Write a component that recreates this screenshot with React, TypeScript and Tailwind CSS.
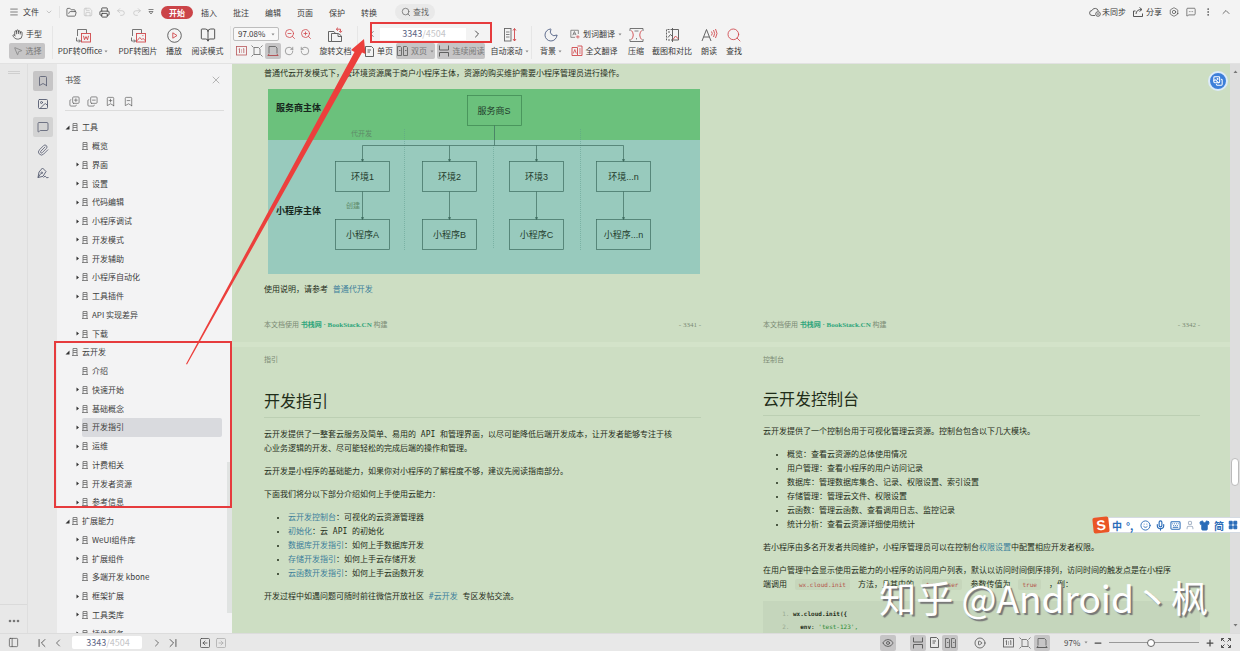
import { Fragment, type ReactNode } from "react";
import clsx from "clsx";
import {
  Bolt,
  BookOpen,
  Bookmark,
  BookmarkMinus,
  BookmarkPlus,
  ChevronDown,
  ChevronFirst,
  ChevronLast,
  ChevronLeft,
  ChevronRight,
  ChevronUp,
  CirclePlay,
  CopyMinus,
  CopyPlus,
  EllipsisVertical,
  Eye,
  FolderOpen,
  Hand,
  Image,
  Images,
  Keyboard,
  LayoutGrid,
  Menu,
  MessageSquare,
  MessageSquareMore,
  Mic,
  Minus,
  Moon,
  MousePointer2,
  PanelLeft,
  Paperclip,
  Plus,
  Printer,
  Redo2,
  RotateCcw,
  RotateCw,
  Save,
  Search,
  Shirt,
  Smile,
  SquareArrowLeft,
  SquareArrowRight,
  Undo2,
  User,
  X,
  ZoomIn,
  ZoomOut,
} from "lucide-react";

const UI_FONT = "font-['Noto_Sans_CJK_SC',sans-serif]";
const DOC_FONT = "font-['DejaVu_Sans_Mono','Noto_Sans_CJK_SC',monospace]";

type TreeNode = { label: string; level: 0 | 1; leaf?: boolean; active?: boolean };

const TREE: TreeNode[] = [
  { label: "工具", level: 0 },
  { label: "概览", level: 1, leaf: true },
  { label: "界面", level: 1 },
  { label: "设置", level: 1 },
  { label: "代码编辑", level: 1 },
  { label: "小程序调试", level: 1 },
  { label: "开发模式", level: 1 },
  { label: "开发辅助", level: 1 },
  { label: "小程序自动化", level: 1 },
  { label: "工具插件", level: 1 },
  { label: "API 实现差异", level: 1, leaf: true },
  { label: "下载", level: 1 },
  { label: "云开发", level: 0 },
  { label: "介绍", level: 1, leaf: true },
  { label: "快速开始", level: 1 },
  { label: "基础概念", level: 1 },
  { label: "开发指引", level: 1, active: true },
  { label: "运维", level: 1 },
  { label: "计费相关", level: 1 },
  { label: "开发者资源", level: 1 },
  { label: "参考信息", level: 1 },
  { label: "扩展能力", level: 0 },
  { label: "WeUI组件库", level: 1 },
  { label: "扩展组件", level: 1 },
  { label: "多端开发 kbone", level: 1, leaf: true },
  { label: "框架扩展", level: 1 },
  { label: "工具类库", level: 1 },
  { label: "插件服务", level: 1 },
];

const TABS = ["开始", "插入", "批注", "编辑", "页面", "保护", "转换"];

function IconButton({
  label,
  active,
  className,
  children,
}: {
  label: string;
  active?: boolean;
  className?: string;
  children: ReactNode;
}) {
  return (
    <button
      type="button"
      aria-label={label}
      className={clsx(
        "flex shrink-0 items-center justify-center rounded-xs",
        active && "bg-[#c6c5c6]",
        className
      )}
    >
      {children}
    </button>
  );
}

// Ribbon tool: icon on the upper line, caption on the lower one.
function BigTool({
  label,
  menu,
  className,
  children,
}: {
  label: string;
  menu?: boolean;
  className: string;
  children: ReactNode;
}) {
  return (
    <button type="button" className={clsx("flex shrink-0 flex-col items-center gap-px", className)}>
      <span className="flex h-4 items-center pt-0.5">{children}</span>
      <span className="flex h-4 items-center gap-0.5 whitespace-nowrap">
        {label}
        {menu && <Caret />}
      </span>
    </button>
  );
}

function Caret() {
  return (
    <svg width="4" height="3" viewBox="0 0 4 3" fill="#888" className="shrink-0">
      <path d="M0.5 0.5h3L2 2.5z" />
    </svg>
  );
}

function SmallTool({
  label,
  active,
  menu,
  className,
  children,
}: {
  label: string;
  active?: boolean;
  menu?: boolean;
  className?: string;
  children: ReactNode;
}) {
  return (
    <button
      type="button"
      className={clsx(
        "flex h-4 shrink-0 items-center justify-center gap-[3px] whitespace-nowrap rounded-xs",
        active && "bg-[#c6c5c6] text-[#777]",
        className
      )}
    >
      {children}
      <span>{label}</span>
      {menu && <Caret />}
    </button>
  );
}

function ActualSizeIcon({ color }: { color: string }) {
  return (
    <svg width="11" height="10" viewBox="0 0 11 10" fill="none" stroke={color} strokeWidth="0.8">
      <rect x="0.5" y="0.5" width="10" height="8.5" />
      <path d="M2.700 3.200l.8-.6v4.400M7 3.200l.8-.6v4.400M5.500 3.500v1M5.500 5.500v1" />
    </svg>
  );
}

function FitPageIcon() {
  return (
    <svg width="12" height="12" viewBox="0 0 12 12" fill="none" stroke="#666" strokeWidth="0.8">
      <path d="M3 9.500v-7h4.500L9 4v5.500z" />
      <path d="M0.500 0.500l2 2M11.500 0.500l-2 2M0.500 11.500l2-2M11.500 11.500l-2-2" />
    </svg>
  );
}

function FitWidthIcon({ color }: { color: string }) {
  return (
    <svg width="12" height="12" viewBox="0 0 12 12" fill="none" stroke="#666" strokeWidth="0.9">
      <path d="M2 8.500V1.500h6.500L10 3v5.500" />
      <path d="M1 10.500h10M2.200 9L.7 10.500M9.800 9l1.500 1.500" stroke={color} />
    </svg>
  );
}

function ContinuousIcon() {
  return (
    <svg width="12" height="12" viewBox="0 0 12 12" fill="none" stroke="#555" strokeWidth="0.9">
      <path d="M1.500 0.500v4.500h9V0.500M1.500 11.500V7.500h9v4" />
    </svg>
  );
}

function SinglePageIcon() {
  return (
    <svg width="9" height="11" viewBox="0 0 9 11" fill="none" stroke="#555" strokeWidth="0.9" className="shrink-0">
      <path d="M0.500 0.500h6l2 2v8h-8zM2.500 4h3.500M2.500 6h2.500" />
    </svg>
  );
}

function TwoPageIcon() {
  return (
    <svg width="11" height="10" viewBox="0 0 11 10" fill="none" stroke="#666" strokeWidth="0.9" className="shrink-0">
      <path d="M0.500 0.500h3l1 1v8h-4zM6.500 0.500h3l1 1v8h-4zM2 4.500h1.500M8 4.500h1.500" />
    </svg>
  );
}

function ShareIcon() {
  return (
    <svg width="11" height="10" viewBox="0 0 11 10" fill="none" stroke="#444" strokeWidth="0.9">
      <path d="M2.500 4H.5v5.500h9V6.500" />
      <path d="M3 7q.3-4.500 5.500-4.500M6.500.5l2.500 2-2.500 2" />
    </svg>
  );
}

function UnsyncedIcon() {
  return (
    <svg width="12" height="10" viewBox="0 0 12 10" fill="none" stroke="#555" strokeWidth="0.9">
      <path d="M6 8.500H3.200a2.500 2.500 0 01-.2-5 3.300 3.300 0 016.300.5" />
      <circle cx="9" cy="7" r="2.300" />
      <path d="M8 7h2" />
    </svg>
  );
}

function FullscreenIcon() {
  return (
    <svg width="10" height="10" viewBox="0 0 10 10" fill="none" stroke="#555">
      <path d="M.5 3V.5H3M.5.5l3 3M7 .5h2.500V3M9.500.5l-3 3M.5 7v2.500H3M.5 9.500l3-3M7 9.500h2.500V7M9.500 9.500l-3-3" />
    </svg>
  );
}

function SignIcon() {
  return (
    <svg width="12" height="12" viewBox="0 0 12 12" fill="none" stroke="currentColor" strokeWidth="0.9">
      <path d="M1 10.500L2 5l3.500-4L9 4.500l-3 4.800-5 1.200 2.800-4" />
      <circle cx="4.800" cy="5.800" r="0.800" />
      <path d="M6.500 10.500q2-2.500 2.300-.8t2.700.8" />
    </svg>
  );
}

function ConvertIcon({ kind }: { kind: "office" | "image" }) {
  return (
    <svg width="16" height="15" viewBox="0 0 16 15" fill="none" stroke="#666" strokeWidth="0.9">
      <path d="M2.500 8V1.500h9V5" />
      <path d="M1.500 9.500v3.500h4M4 11.500l1.400 1.500L4 14.500" />
      <rect x="6.500" y="5.500" width="9" height="8.500" stroke="#d0484c" />
      {kind === "office" ? (
        <path d="M8.500 7.800l1 4 1.500-3.200 1.500 3.200 1-4" stroke="#d0484c" />
      ) : (
        <path d="M7 12.800l2.800-3.300 2 2.200 1.300-1.300 2.200 2.400M12.400 7.600h1" stroke="#d0484c" />
      )}
    </svg>
  );
}

function RotateDocIcon() {
  return (
    <svg width="17" height="16" viewBox="0 0 17 16" fill="none" stroke="#555" strokeWidth="0.9">
      <path d="M4.500 14.500h-3v-10h5.500l1.500 2" />
      <path d="M4.500 14.500v-8h7l3 2.500v5.500zM11 7v2.500h3" />
      <path d="M9.500 2.200h4v2.600M11 .6L9.300 2.200 11 3.800M12 4l1.600 1.400L15.200 4" stroke="#d0484c" />
    </svg>
  );
}

function AutoScrollIcon() {
  return (
    <svg width="14" height="16" viewBox="0 0 14 16" fill="none" stroke="#666" strokeWidth="0.9">
      <rect x="1.500" y="1.500" width="6.500" height="12.500" />
      <path d="M3 5h3.500M3 7.500h3.500M3 10h3.500" strokeWidth="0.8" />
      <path d="M11.500 1.500V14M10 3.500l1.500-2 1.500 2M10 12l1.500 2 1.500-2" stroke="#d0484c" />
    </svg>
  );
}

function TranslateIcon({ full }: { full?: boolean }) {
  return (
    <svg
      width="12"
      height="12"
      viewBox="0 0 12 12"
      fill="none"
      stroke={full ? "#d0484c" : "#666"}
      strokeWidth="0.9"
    >
      {full ? (
        <>
          <path d="M1 2.500h5.500v8H1zM6.500 1H11v9.500H6.500" />
          <path d="M2.300 8.500l1.500-4 1.500 4M8 4h1.800M8 6h1.800M8 8h1.800" strokeWidth="0.8" />
        </>
      ) : (
        <>
          <path d="M10 6V1.500H1v8.500h5" />
          <path d="M3.300 7.500L5.300 3l2 4.500M4 6h2.600" />
          <path d="M7 9.500h4.500M9.500 7.500v4" stroke="#d0484c" />
        </>
      )}
    </svg>
  );
}

function CompressIcon() {
  return (
    <svg width="15" height="14" viewBox="0 0 15 14" fill="none" strokeWidth="0.9">
      <path d="M1 3V.5h13V3M1 11v2.500h13V11" stroke="#666" />
      <path d="M2.500 2.500q3.500 4.500 0 9M12.500 2.500q-3.500 4.500 0 9" stroke="#d0484c" />
      <path d="M5.500 3h4M7.500 10v1.500" stroke="#777" />
    </svg>
  );
}

function CompareIcon() {
  return (
    <svg width="15" height="14" viewBox="0 0 15 14" fill="none" stroke="#555" strokeWidth="0.9">
      <path d="M7.500 1.500h-6v10.500h6" strokeDasharray="2 1" />
      <path d="M7.500 1.500h6v10.500h-6" />
      <path d="M7.500 0v14M3 4h2M3 9.500l2.500-3 2 2" />
      <path d="M8 11.500l2.500-3.500 3 3" stroke="#d0484c" />
    </svg>
  );
}

function ReadAloudIcon() {
  return (
    <svg width="17" height="14" viewBox="0 0 17 14" fill="none" stroke="#555" strokeWidth="0.9">
      <path d="M1 13L5.500 1.500 10 13M2.700 9h5.600" />
      <path d="M10.500 3.500q1.500 2 0 4M12.500 2q2.300 3.500 0 7M14.500 1q3 4.500 0 9" stroke="#d0484c" />
    </svg>
  );
}

function PageNumber({ className }: { className: string }) {
  return (
    <label
      className={clsx(
        "flex items-center justify-center bg-white text-[9px] text-[#c4c4c8]",
        className
      )}
    >
      <input
        type="text"
        aria-label="页码"
        defaultValue="3343"
        className="w-[22px] bg-transparent text-right text-[#5b6583] outline-none"
      />
      /4504
    </label>
  );
}

function TopBar() {
  return (
    <header className="flex shrink-0 flex-col bg-[#f3f3f3] text-[8px] text-[#3a3a3a]">
      <div className="flex h-6 items-center justify-between pl-[9px] pr-2">
        <div className="flex items-center">
          <button type="button" className="flex items-center gap-1 border-r border-[#e4e4e4] pr-1.5">
            <Menu size={10} strokeWidth={1.5} />
            文件
            <ChevronDown size={8} strokeWidth={1.5} className="ml-0.5 text-[#999]" />
          </button>
          <div className="flex items-center gap-1.5 pl-1.5">
            <IconButton label="打开">
              <FolderOpen size={11} strokeWidth={1.5} />
            </IconButton>
            <IconButton label="保存" className="text-[#bbb]">
              <Save size={10} strokeWidth={1.5} />
            </IconButton>
            <IconButton label="打印">
              <Printer size={11} strokeWidth={1.8} />
            </IconButton>
            <IconButton label="撤销" className="text-[#bbb]">
              <Undo2 size={10} strokeWidth={1.5} />
            </IconButton>
            <IconButton label="重做" className="text-[#bbb]">
              <Redo2 size={10} strokeWidth={1.5} />
            </IconButton>
            <IconButton label="更多">
              <svg width="6" height="6" viewBox="0 0 6 6" fill="none" stroke="#666" strokeWidth="0.8">
                <path d="M0.500 0.500h5M1 2.500h4L3 5z" />
              </svg>
            </IconButton>
          </div>
          <nav className="ml-[7px] flex items-center">
            {TABS.map((tab, i) => (
              <button
                key={tab}
                type="button"
                className={clsx(
                  "h-[13px] w-8 rounded-full text-center leading-[13px]",
                  i === 0 && "bg-[#cb4448] font-bold text-white"
                )}
              >
                {tab}
              </button>
            ))}
          </nav>
          <button
            type="button"
            className="ml-2.5 flex h-4 items-center gap-0.5 rounded-full bg-[#e9e9e9] px-1.5 text-[#666]"
          >
            <Search size={10} strokeWidth={1.8} />
            查找
          </button>
        </div>
        <div className="flex items-center gap-[7px]">
          <button type="button" className="flex items-center gap-px">
            <UnsyncedIcon />
            未同步
          </button>
          <button type="button" className="flex items-center gap-0.5">
            <ShareIcon />
            分享
          </button>
          <IconButton label="设置">
            <Bolt size={10} strokeWidth={1.5} />
          </IconButton>
          <IconButton label="反馈">
            <MessageSquareMore size={10} strokeWidth={1.5} />
          </IconButton>
          <IconButton label="更多选项">
            <EllipsisVertical size={10} strokeWidth={1.5} />
          </IconButton>
          <IconButton label="收起功能区">
            <ChevronUp size={12} strokeWidth={1.4} />
          </IconButton>
        </div>
      </div>

      <div className="flex h-10 items-start border-b border-[#e2e2e2] pt-0.5">
        <div className="flex flex-col gap-px border-r border-[#e6e6e6] pl-[9px] pr-[7px]">
          <SmallTool label="手型" className="w-9">
            <Hand size={11} strokeWidth={1.6} />
          </SmallTool>
          <SmallTool label="选择" active className="w-9">
            <MousePointer2 size={10} strokeWidth={1.6} />
          </SmallTool>
        </div>
        <BigTool label="PDF转Office" menu className="w-[60px]">
          <ConvertIcon kind="office" />
        </BigTool>
        <BigTool label="PDF转图片" className="w-[50px]">
          <ConvertIcon kind="image" />
        </BigTool>
        <BigTool label="播放" className="w-[22px]">
          <svg width="15" height="15" viewBox="0 0 15 15" fill="none" stroke="#555" strokeWidth="0.9">
            <circle cx="7.500" cy="7.500" r="6.800" />
            <path d="M5.800 4.800v5.400l4.200-2.700z" stroke="#d0484c" />
          </svg>
        </BigTool>
        <BigTool label="阅读模式" className="w-[46px] border-r border-[#e6e6e6]">
          <BookOpen size={16} strokeWidth={1.3} />
        </BigTool>
        <div className="flex flex-col gap-px pl-0.5">
          <div className="flex h-4 items-center">
            <label className="relative mr-[3px] flex w-[46px] items-center">
              <select
                aria-label="缩放比例"
                className="h-3.5 w-full appearance-none rounded-xs border border-[#bdbdbd] bg-[#f8f8f8] pl-1 text-[8px] leading-3 outline-none"
              >
                <option>97.08%</option>
              </select>
              <span className="absolute right-1">
                <Caret />
              </span>
            </label>
            <IconButton label="缩小" className="w-4 text-[#d0484c]">
              <ZoomOut size={12} strokeWidth={1.6} />
            </IconButton>
            <IconButton label="放大" className="w-4 text-[#d0484c]">
              <ZoomIn size={12} strokeWidth={1.6} />
            </IconButton>
          </div>
          <div className="flex h-4 items-center">
            <IconButton label="实际大小" className="h-4 w-4">
              <ActualSizeIcon color="#b9585b" />
            </IconButton>
            <IconButton label="适合页面" className="h-4 w-4">
              <FitPageIcon />
            </IconButton>
            <IconButton label="适合宽度" active className="h-4 w-4">
              <FitWidthIcon color="#b04a4c" />
            </IconButton>
            <IconButton label="向左旋转" className="h-4 w-4 text-[#777]">
              <RotateCw size={10} strokeWidth={1.6} />
            </IconButton>
            <IconButton label="向右旋转" className="h-4 w-4 text-[#777]">
              <RotateCcw size={10} strokeWidth={1.6} />
            </IconButton>
          </div>
        </div>
        <BigTool label="旋转文档" className="w-[44px] border-r border-[#e6e6e6]">
          <RotateDocIcon />
        </BigTool>
        <div className="flex flex-col gap-px pl-1.5">
          <div className="flex h-4 items-center">
            <IconButton label="上一页" className="w-4">
              <ChevronLeft size={10} strokeWidth={1.5} />
            </IconButton>
            <PageNumber className="h-3 w-[86px]" />
            <IconButton label="下一页" className="w-[22px]">
              <ChevronRight size={12} strokeWidth={1.8} />
            </IconButton>
          </div>
          <div className="flex h-4 items-center gap-0.5">
            <SmallTool label="单页" className="w-[30px]">
              <SinglePageIcon />
            </SmallTool>
            <SmallTool label="双页" active menu className="w-[39px]">
              <TwoPageIcon />
            </SmallTool>
            <SmallTool label="连续阅读" active className="w-12">
              <ContinuousIcon />
            </SmallTool>
          </div>
        </div>
        <BigTool label="自动滚动" menu className="w-[44px] border-r border-[#e6e6e6]">
          <AutoScrollIcon />
        </BigTool>
        <BigTool label="背景" menu className="w-[38px]">
          <Moon size={16} strokeWidth={1.3} className="text-[#4a5a80]" />
        </BigTool>
        <div className="flex flex-col items-start gap-px">
          <SmallTool label="划词翻译" menu className="w-[52px]">
            <TranslateIcon />
          </SmallTool>
          <SmallTool label="全文翻译" className="w-12">
            <TranslateIcon full />
          </SmallTool>
        </div>
        <BigTool label="压缩" className="w-7">
          <CompressIcon />
        </BigTool>
        <BigTool label="截图和对比" className="w-[44px]">
          <CompareIcon />
        </BigTool>
        <BigTool label="朗读" className="w-[30px]">
          <ReadAloudIcon />
        </BigTool>
        <BigTool label="查找" className="w-5">
          <Search size={16} strokeWidth={1.3} className="text-[#d0484c]" />
        </BigTool>
      </div>
    </header>
  );
}

function Rail() {
  return (
    <>
      <div className="flex w-7 shrink-0 flex-col items-center justify-between border-r border-[#dedede] bg-[#e8e8e8]">
        <div className="mt-[7px] h-[3px] w-3 border-y border-[#cfcfcf]" />
        <div className="flex w-full justify-center border-t border-[#dadada] pb-2.5 pt-3.5">
          <svg width="12" height="4" viewBox="0 0 12 4" fill="#777">
            <circle cx="2" cy="2" r="1.300" />
            <circle cx="6" cy="2" r="1.300" />
            <circle cx="10" cy="2" r="1.300" />
          </svg>
        </div>
      </div>
      <div className="flex w-[29px] shrink-0 flex-col items-center gap-[3px] bg-[#e8e8e8] pt-[7px] text-[#555b70]">
        <IconButton label="书签" active className="h-5 w-5">
          <Bookmark size={12} strokeWidth={1.6} />
        </IconButton>
        <IconButton label="缩略图" className="h-5 w-5">
          <Image size={12} strokeWidth={1.8} />
        </IconButton>
        <IconButton label="批注" className="h-5 w-5 bg-[#d3d3d3]">
          <MessageSquare size={12} strokeWidth={1.6} />
        </IconButton>
        <IconButton label="附件" className="h-5 w-5">
          <Paperclip size={12} strokeWidth={1.6} />
        </IconButton>
        <IconButton label="签名" className="h-5 w-5">
          <SignIcon />
        </IconButton>
      </div>
    </>
  );
}

function NodeIcon() {
  return (
    <svg width="6" height="8" viewBox="0 0 6 8" fill="none" stroke="#777" strokeWidth="0.9" className="shrink-0">
      <path d="M1 7.500V.5h4v7M1 2.500h4M1 4.500h4M0 7.500h6" />
    </svg>
  );
}

function TreeRow({ node }: { node: TreeNode }) {
  return (
    <li className={clsx("flex items-center pr-[5px]", node.level === 0 ? "pl-2" : "pl-[18px]")}>
      <span className="flex w-[7px] shrink-0 items-center">
        {!node.leaf && (
          <svg width="5" height="5" viewBox="0 0 5 5" fill="#333">
            {node.level === 0 ? <path d="M4.500 0.500v4h-4z" /> : <path d="M1.500 0.500l2.500 2-2.500 2z" />}
          </svg>
        )}
      </span>
      <button
        type="button"
        className={clsx(
          "flex h-full flex-1 items-center gap-1 whitespace-nowrap rounded-xs text-left",
          node.active && "bg-[#d9dade]"
        )}
      >
        <NodeIcon />
        {node.label}
      </button>
    </li>
  );
}

function BookmarkPanel() {
  return (
    <aside className="flex w-[175px] shrink-0 flex-col bg-[#f3f3f4] text-[8px] text-[#3c3c3c]">
      <div className="flex h-[31px] items-center justify-between pl-2 pr-2.5">
        <h2>书签</h2>
        <IconButton label="关闭" className="text-[#999]">
          <X size={12} strokeWidth={1.4} />
        </IconButton>
      </div>
      <div className="mx-2 flex h-4 items-center gap-[7px] border-b border-[#dcdcdc] pb-0.5 pl-1 text-[#666]">
        <IconButton label="展开全部">
          <CopyPlus size={11} strokeWidth={1.6} className="-scale-y-100" />
        </IconButton>
        <IconButton label="折叠全部">
          <CopyMinus size={11} strokeWidth={1.6} className="-scale-y-100" />
        </IconButton>
        <IconButton label="添加书签">
          <BookmarkPlus size={11} strokeWidth={1.6} />
        </IconButton>
        <IconButton label="删除书签">
          <BookmarkMinus size={11} strokeWidth={1.6} />
        </IconButton>
      </div>
      <div className="flex min-h-0 flex-1 overflow-hidden">
        <ul className="grid h-[532px] flex-1 auto-rows-fr pt-[7px]">
          {TREE.map((node) => (
            <TreeRow key={node.label} node={node} />
          ))}
        </ul>
        <div className="flex w-[5px] flex-col justify-end pb-5">
          <div className="h-[151px] bg-[#e0e3e2]" />
        </div>
      </div>
    </aside>
  );
}

const ENVIRONMENTS = [
  { x: 94, env: "环境1", app: "小程序A" },
  { x: 181, env: "环境2", app: "小程序B" },
  { x: 268, env: "环境3", app: "小程序C" },
  { x: 355, env: "环境...n", app: "小程序...n" },
];

function TenantDiagram() {
  return (
    <svg
      viewBox="0 0 432 185"
      className="ml-1 mt-2 block w-[calc(100%-5px)] font-['Liberation_Sans','Noto_Sans_CJK_SC',sans-serif] text-[9px]"
    >
      <rect width="432" height="52" fill="#6bc17c" />
      <rect y="51" width="432" height="134" fill="#98cabd" />
      <g stroke="#5d9a8b" strokeDasharray="1 1" strokeWidth="0.5">
        <path d="M136.500 40v121M312.500 40v121M225.500 56v103" />
      </g>
      <g fill="none" stroke="#3d6b5f" strokeWidth="0.7">
        <rect x="199.500" y="6.500" width="54" height="30" stroke="#3d8350" />
        <path d="M226.500 36.500v20M94.500 72V56.500h261V72M181.500 56.500V72M268.500 56.500V72" />
        {ENVIRONMENTS.map(({ x }) => (
          <Fragment key={x}>
            <rect x={x - 26.5} y="72.500" width="54" height="30" />
            <rect x={x - 26.5} y="130.500" width="54" height="30" />
            <path d={`M${x + 0.5} 102.500v28`} />
            <path d={`M${x - 0.5} 70.500l1 2 1-2zM${x - 0.5} 128.500l1 2 1-2z`} fill="#3d6b5f" />
          </Fragment>
        ))}
      </g>
      <g fill="#1f3a2b" textAnchor="middle">
        <text x="226" y="25">服务商S</text>
        {ENVIRONMENTS.map(({ x, env, app }) => (
          <Fragment key={x}>
            <text x={x + 0.5} y="91">{env}</text>
            <text x={x + 0.5} y="149">{app}</text>
          </Fragment>
        ))}
      </g>
      <g fill="#16271c" fontWeight="700">
        <text x="8" y="22">服务商主体</text>
        <text x="8" y="125">小程序主体</text>
      </g>
      <g fill="#5e8a68" fontSize="7">
        <text x="83" y="47">代开发</text>
        <text x="78" y="119">创建</text>
      </g>
    </svg>
  );
}

function PageFooter({ page }: { page: number }) {
  return (
    <footer className="mt-auto flex justify-between font-['Liberation_Serif','Noto_Sans_CJK_SC',serif] text-[7px] leading-[14px] text-[#7b8b74]">
      <span>
        本文档使用{" "}
        <a href="#bookstack" className="font-bold text-[#2fa57b]">
          书栈网 · BookStack.CN
        </a>{" "}
        构建
      </span>
      <span>- {page} -</span>
    </footer>
  );
}

function DocLink({ children }: { children: ReactNode }) {
  return (
    <a href="#doc" className="text-[#3d7f9b]">
      {children}
    </a>
  );
}

function InlineCode({ children }: { children: ReactNode }) {
  return (
    <code className="mx-2 rounded-xs bg-[#c6d6bb] px-1 py-0.5 font-['DejaVu_Sans_Mono',monospace] text-[6px] text-[#b5534a]">
      {children}
    </code>
  );
}

const GUIDE_LINKS = [
  ["云开发控制台", "：可视化的云资源管理器"],
  ["初始化", "：云 API 的初始化"],
  ["数据库开发指引", "：如何上手数据库开发"],
  ["存储开发指引", "：如何上手云存储开发"],
  ["云函数开发指引", "：如何上手云函数开发"],
];

const CONSOLE_MODULES = [
  "概览：查看云资源的总体使用情况",
  "用户管理：查看小程序的用户访问记录",
  "数据库：管理数据库集合、记录、权限设置、索引设置",
  "存储管理：管理云文件、权限设置",
  "云函数：管理云函数、查看调用日志、监控记录",
  "统计分析：查看云资源详细使用统计",
];

function Document() {
  return (
    <main
      className={clsx(
        "grid min-w-0 flex-1 grid-cols-2 grid-rows-[278px_minmax(0,1fr)] gap-y-[5px] overflow-hidden bg-[#d3e3c9] text-[8px] leading-[14px] text-[#1f2d19]",
        DOC_FONT
      )}
    >
      <section className="flex flex-col bg-[#cddec3] pb-2.5 pl-8 pr-[30px] pt-[3px]">
        <p>普通代云开发模式下，云环境资源属于商户小程序主体，资源的购买维护需要小程序管理员进行操作。</p>
        <TenantDiagram />
        <p className="mt-[9px]">
          使用说明，请参考 <DocLink>普通代开发</DocLink>
        </p>
        <PageFooter page={3341} />
      </section>

      <section className="flex flex-col bg-[#cddec3] pb-2.5 pl-8 pr-[30px]">
        <PageFooter page={3342} />
      </section>

      <section className="overflow-hidden bg-[#cddec3] pl-8 pr-[30px] pt-1.5">
        <div className="text-[7px] text-[#7b8b74]">指引</div>
        <h1 className="mt-[23px] border-b border-[#bccfb3] pb-[3px] text-[16px] leading-6">开发指引</h1>
        <div className="mt-2.5 flex flex-col gap-[9px]">
          <p>
            云开发提供了一整套云服务及简单、易用的 API 和管理界面，以尽可能降低后端开发成本，让开发者能够专注于核
            <br />
            心业务逻辑的开发、尽可能轻松的完成后端的操作和管理。
          </p>
          <p>云开发是小程序的基础能力，如果你对小程序的了解程度不够，建议先阅读指南部分。</p>
          <p>下面我们将分以下部分介绍如何上手使用云能力：</p>
          <ul className="list-disc pl-6">
            {GUIDE_LINKS.map(([link, rest]) => (
              <li key={link}>
                <DocLink>{link}</DocLink>
                {rest}
              </li>
            ))}
          </ul>
          <p>
            开发过程中如遇问题可随时前往微信开放社区 <DocLink>#云开发</DocLink> 专区发帖交流。
          </p>
        </div>
      </section>

      <section className="overflow-hidden bg-[#cddec3] pl-8 pr-[30px] pt-1.5">
        <div className="text-[7px] text-[#7b8b74]">控制台</div>
        <h1 className="mt-[21px] border-b border-[#bccfb3] pb-[3px] text-[16px] leading-6">云开发控制台</h1>
        <div className="mt-[9px] flex flex-col gap-[9px]">
          <p>云开发提供了一个控制台用于可视化管理云资源。控制台包含以下几大模块。</p>
          <ul className="list-disc pl-6">
            {CONSOLE_MODULES.map((item) => (
              <li key={item}>{item}</li>
            ))}
          </ul>
          <p>
            若小程序由多名开发者共同维护，小程序管理员可以在控制台<DocLink>权限设置</DocLink>
            中配置相应开发者权限。
          </p>
          <p>
            在用户管理中会显示使用云能力的小程序的访问用户列表，默认以访问时间倒序排列，访问时间的触发点是在小程序
            <br />
            端调用
            <InlineCode>wx.cloud.init</InlineCode>
            方法，且其中的
            <InlineCode>traceUser</InlineCode>
            参数传值为
            <InlineCode>true</InlineCode>
            ，例：
          </p>
          <ol className="list-decimal bg-[#c5d6bc] py-1.5 pl-[30px] text-[6px] leading-[13px] marker:text-[#9aaa92]">
            <li>
              <code className="whitespace-pre font-['DejaVu_Sans_Mono',monospace] font-bold">
                {"wx.cloud.init({"}
              </code>
            </li>
            <li>
              <code className="whitespace-pre font-['DejaVu_Sans_Mono',monospace]">
                {"  "}
                <b>env</b>: <span className="text-[#2c8a33]">'test-123',</span>
              </code>
            </li>
          </ol>
        </div>
      </section>
    </main>
  );
}

function DocScrollbar() {
  return (
    <div className="flex w-2.5 shrink-0 flex-col items-center bg-[#dedede] py-1.5">
      <svg width="5" height="3" viewBox="0 0 5 3" fill="#777">
        <path d="M0.500 3l2-2.500 2 2.500z" />
      </svg>
      <div className="flex flex-[410] flex-col justify-end">
        <div className="h-7 w-2 rounded-full border border-[#bbb] bg-white" />
      </div>
      <div className="flex-[137]" />
      <svg width="5" height="3" viewBox="0 0 5 3" fill="#777">
        <path d="M0.500 0l2 2.500 2-2.500z" />
      </svg>
    </div>
  );
}

function StatusBar() {
  return (
    <footer className="flex h-[18px] shrink-0 items-center justify-between border-t border-[#dcdcdc] bg-[#e8e8e8] pl-2 pr-1.5 text-[8px] text-[#4a4a4a]">
      <div className="flex items-center">
        <IconButton label="导航窗格" className="mr-[15px]">
          <PanelLeft size={11} strokeWidth={1.5} />
        </IconButton>
        <IconButton label="第一页" className="w-4">
          <ChevronFirst size={14} strokeWidth={1.5} />
        </IconButton>
        <IconButton label="上一页" className="mr-1.5 w-4">
          <ChevronLeft size={12} strokeWidth={1.5} />
        </IconButton>
        <PageNumber className="h-[13px] w-[70px] rounded-xs" />
        <IconButton label="下一页" className="ml-[7px] w-4">
          <ChevronRight size={12} strokeWidth={1.5} />
        </IconButton>
        <IconButton label="最后一页" className="mr-4 w-4">
          <ChevronLast size={14} strokeWidth={1.5} />
        </IconButton>
        <IconButton label="后退" className="w-4">
          <SquareArrowLeft size={12} strokeWidth={1.5} />
        </IconButton>
        <IconButton label="前进" className="w-4 text-[#aaa]">
          <SquareArrowRight size={12} strokeWidth={1.5} />
        </IconButton>
      </div>
      <div className="flex items-center">
        <IconButton label="护眼模式" active className="mr-3.5 h-4 w-4">
          <Eye size={12} strokeWidth={1.5} />
        </IconButton>
        <IconButton label="连续阅读" active className="h-4 w-4">
          <ContinuousIcon />
        </IconButton>
        <IconButton label="单页" className="h-4 w-4">
          <SinglePageIcon />
        </IconButton>
        <IconButton label="双页" active className="mr-3.5 h-4 w-4">
          <TwoPageIcon />
        </IconButton>
        <IconButton label="播放" className="mr-3 h-4 w-4">
          <CirclePlay size={12} strokeWidth={1.5} />
        </IconButton>
        <IconButton label="实际大小" className="h-4 w-4">
          <ActualSizeIcon color="#555" />
        </IconButton>
        <IconButton label="适合页面" className="h-4 w-[18px]">
          <FitPageIcon />
        </IconButton>
        <IconButton label="适合宽度" active className="mr-3.5 h-4 w-4">
          <FitWidthIcon color="#555" />
        </IconButton>
        <button type="button" className="flex w-[26px] items-center gap-1">
          97%
          <Caret />
        </button>
        <IconButton label="缩小" className="w-4">
          <Minus size={10} strokeWidth={3} />
        </IconButton>
        <input
          type="range"
          aria-label="缩放"
          defaultValue={46}
          className="mx-[3px] h-2 w-[90px] appearance-none bg-[linear-gradient(#999,#999)] bg-[length:100%_1px] bg-center bg-no-repeat [&::-webkit-slider-thumb]:size-2 [&::-webkit-slider-thumb]:appearance-none [&::-webkit-slider-thumb]:rounded-full [&::-webkit-slider-thumb]:border [&::-webkit-slider-thumb]:border-[#666] [&::-webkit-slider-thumb]:bg-white"
        />
        <IconButton label="放大" className="w-4">
          <Plus size={10} strokeWidth={3} />
        </IconButton>
        <IconButton label="全屏" className="w-4">
          <FullscreenIcon />
        </IconButton>
      </div>
    </footer>
  );
}

function ImeBar() {
  return (
    <div className="absolute right-0 top-[517px] flex h-4 items-center gap-1 border-y border-[#d5dbe3] bg-white pl-[18px] pr-0.5 text-[10px] font-bold text-[#2a6cb8]">
      <span className="absolute left-[-1px] flex size-4 -rotate-6 items-center justify-center rounded-xs bg-[#ea5626] font-['Liberation_Sans',sans-serif] text-[14px] text-white">
        S
      </span>
      <span>中</span>
      <span className="w-2.5">°,</span>
      <Smile size={11} strokeWidth={2} />
      <Mic size={11} strokeWidth={2.5} />
      <Keyboard size={11} strokeWidth={2.2} />
      <User size={10} strokeWidth={2.5} className="text-[#a9b6c8]" />
      <Shirt size={11} fill="#2a6cb8" />
      <span>简</span>
      <LayoutGrid size={10} strokeWidth={2.5} fill="#2a6cb8" />
    </div>
  );
}

// Red boxes and the arrow that links the bookmark tree with the page field.
function Annotations() {
  return (
    <div className="pointer-events-none absolute inset-0">
      <div className="absolute left-[54px] top-[341px] h-[167px] w-[178px] border-2 border-[#e63b3d]" />
      <div className="absolute left-[370px] top-[22px] h-[21px] w-[122px] border-2 border-[#e63b3d]" />
      <svg width="372" height="366" viewBox="0 0 372 366" className="absolute left-0 top-0" fill="#ec3f3c">
        <path d="M186 364L354.500 52l-3.500-2L364 39l1.500 15-3.500-1.500L187 364.500z" />
      </svg>
    </div>
  );
}

export default function App() {
  return (
    <div className={clsx("relative flex h-screen flex-col overflow-hidden", UI_FONT)}>
      <TopBar />
      <div className="flex min-h-0 flex-1">
        <Rail />
        <BookmarkPanel />
        <Document />
        <DocScrollbar />
      </div>
      <StatusBar />

      <button
        type="button"
        aria-label="转换文档"
        className="absolute right-3 top-[71px] flex size-5 items-center justify-center rounded-full border-2 border-[#dcebfa] bg-[#3d7fd9] text-white"
      >
        <Images size={10} strokeWidth={2.5} className="-scale-x-100" />
      </button>
      <ImeBar />
      <Annotations />
      <div className="pointer-events-none absolute bottom-7 right-8 whitespace-nowrap text-[37px] leading-[52px] text-white [text-shadow:2px_2px_1px_#777]">
        知乎 @Android丶枫
      </div>
    </div>
  );
}
